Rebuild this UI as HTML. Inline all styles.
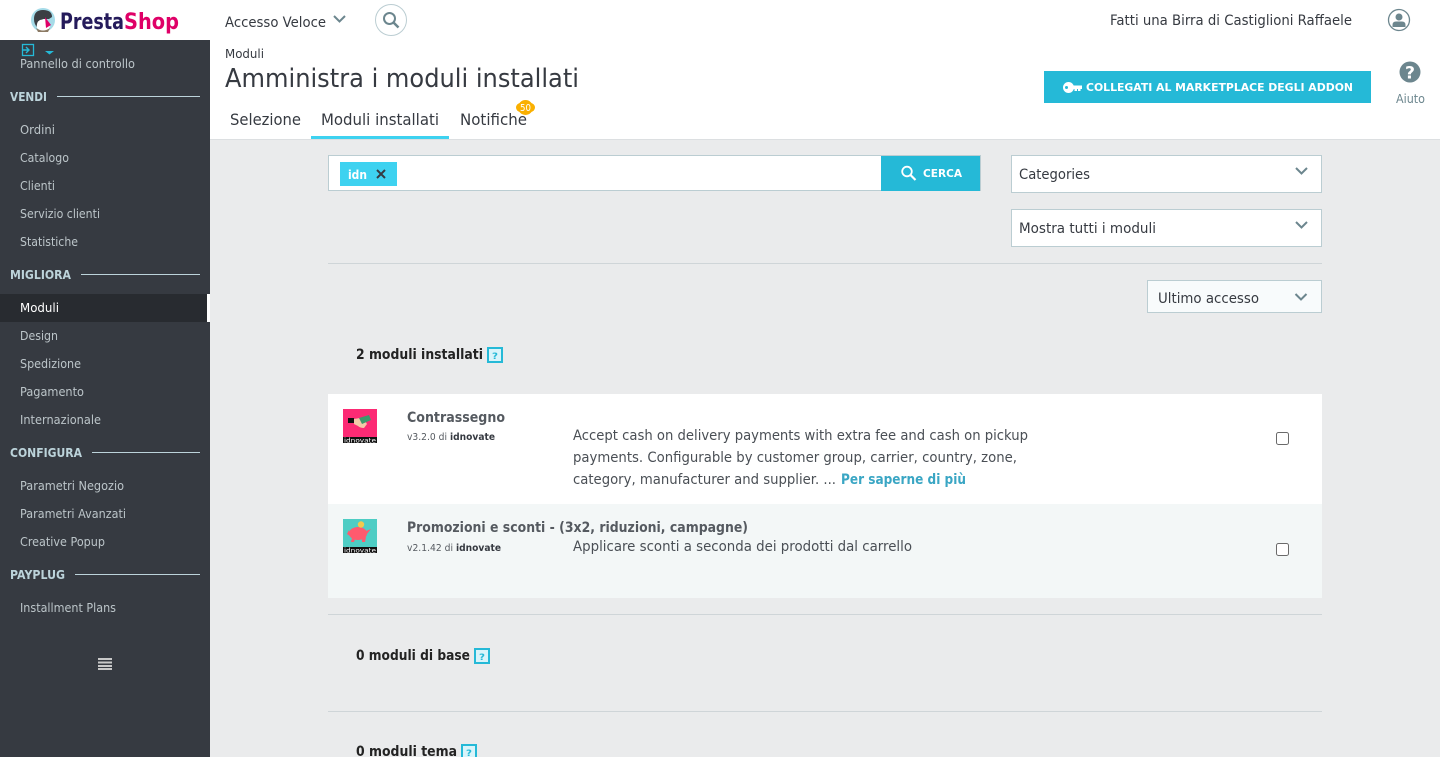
<!DOCTYPE html>
<html lang="it"><head><meta charset="utf-8"><title>Amministra i moduli installati</title>
<style>
html,body{margin:0;padding:0;width:1440px;height:757px;overflow:hidden;background:#eaebec;font-family:"DejaVu Sans","Liberation Sans",sans-serif}
.b{position:absolute;box-sizing:border-box}
svg{position:absolute;left:0;top:0}
text{font-family:"DejaVu Sans","Liberation Sans",sans-serif}
.s{font-size:12.5px;fill:#bcc5c9}
.h{font-size:12.5px;font-weight:bold;fill:#bcd3da}
.sel{background:#fff;border:1px solid #bbcdd2}
</style></head><body>
<div class="b" style="left:0;top:0;width:1440px;height:40px;background:#fff"></div>
<div class="b" style="left:210px;top:40px;width:1230px;height:100px;background:#fff;border-bottom:1px solid #dcdfe1"></div>
<div class="b" style="left:0;top:40px;width:210px;height:717px;background:#363a41"></div>
<div class="b" style="left:0;top:294px;width:210px;height:28px;background:#282b30"></div>
<div class="b" style="left:207px;top:294px;width:3px;height:28px;background:#fff"></div>
<div class="b" style="left:311px;top:136px;width:138px;height:3px;background:#3ed2f0"></div>
<div class="b" style="left:1044px;top:71px;width:327px;height:32px;background:#25b9d7"></div>
<div class="b" style="left:328px;top:155px;width:653px;height:36px;background:#fff;border:1px solid #bbcdd2"></div>
<div class="b" style="left:881px;top:156px;width:99px;height:35px;background:#25b9d7"></div>
<div class="b" style="left:340px;top:162px;width:57px;height:24px;background:#3ed2f0"></div>
<div class="b sel" style="left:1011px;top:155px;width:311px;height:38px"></div>
<div class="b sel" style="left:1011px;top:209px;width:311px;height:38px"></div>
<div class="b" style="left:328px;top:263px;width:994px;height:1px;background:#cfd5d8"></div>
<div class="b sel" style="left:1147px;top:280px;width:175px;height:33px;background:#f8fbfc"></div>
<div class="b" style="left:328px;top:394px;width:994px;height:110px;background:#fff"></div>
<div class="b" style="left:328px;top:504px;width:994px;height:94px;background:#f3f7f7"></div>
<div class="b" style="left:328px;top:614px;width:994px;height:1px;background:#cfd5d8"></div>
<div class="b" style="left:328px;top:711px;width:994px;height:1px;background:#cfd5d8"></div>

<svg width="1440" height="757" viewBox="0 0 1440 757" xmlns="http://www.w3.org/2000/svg">
<!-- logo -->
<circle cx="43" cy="20" r="12" fill="#a5dbe8"/>
<path d="M34 19q0-9 9-9t9 7l-3 2-6 0-4 3-2 5q-3-3-3-8z" fill="#3b3f44"/>
<path d="M37 28q-1-6 3-8l5-1 3 2 2 5-2 5q-6 2-11-3z" fill="#fff"/>
<path d="M45 17l6 8-5 3z" fill="#df0067"/>
<path d="M36 28q7 5 14 0l-2 4h-10z" fill="#8c7a64"/>
<text x="60" y="29" font-size="22.500" font-weight="bold" fill="#251b5b" textLength="64" lengthAdjust="spacingAndGlyphs">Presta</text>
<text x="124" y="29" font-size="22.500" font-weight="bold" fill="#df0067" textLength="55" lengthAdjust="spacingAndGlyphs">Shop</text>

<!-- top bar -->
<text x="225" y="27" font-size="14" fill="#363a41" textLength="101" lengthAdjust="spacingAndGlyphs">Accesso Veloce</text>
<path d="M334 16l5.500 5.500 5.500-5.500" fill="none" stroke="#6c868e" stroke-width="2"/>
<circle cx="391" cy="20" r="15.500" fill="#fff" stroke="#bbcdd2"/>
<circle cx="389.500" cy="18.500" r="5.500" fill="none" stroke="#6c868e" stroke-width="2"/>
<path d="M393.500 22.500l5 5" stroke="#6c868e" stroke-width="2.500"/>
<text x="1110" y="25" font-size="14" fill="#363a41" textLength="242" lengthAdjust="spacingAndGlyphs">Fatti una Birra di Castiglioni Raffaele</text>
<circle cx="1399" cy="20" r="10.500" fill="#fff" stroke="#6c868e" stroke-width="1.300"/>
<circle cx="1399" cy="17" r="3.500" fill="#6c868e"/>
<path d="M1392.500 27v-2q0-3.500 3.500-3.500h6q3.500 0 3.500 3.500v2z" fill="#6c868e"/>

<!-- sidebar -->
<rect x="22.500" y="44.500" width="11" height="11" fill="none" stroke="#25b9d7" stroke-width="1.300"/>
<path d="M22 50h7M26 47l3 3-3 3" fill="none" stroke="#25b9d7" stroke-width="1.400"/>
<path d="M45 51h9l-4.500 3.500z" fill="#25b9d7"/>
<text class="s" x="20" y="68" textLength="115" lengthAdjust="spacingAndGlyphs">Pannello di controllo</text>
<text class="h" x="10" y="101" textLength="37" lengthAdjust="spacingAndGlyphs">VENDI</text>
<rect x="57" y="96" width="143" height="1" fill="#bcd3da"/>
<text class="s" x="20" y="134" textLength="35" lengthAdjust="spacingAndGlyphs">Ordini</text>
<text class="s" x="20" y="162" textLength="49" lengthAdjust="spacingAndGlyphs">Catalogo</text>
<text class="s" x="20" y="190" textLength="35" lengthAdjust="spacingAndGlyphs">Clienti</text>
<text class="s" x="20" y="218" textLength="80" lengthAdjust="spacingAndGlyphs">Servizio clienti</text>
<text class="s" x="20" y="246" textLength="58" lengthAdjust="spacingAndGlyphs">Statistiche</text>
<text class="h" x="10" y="279" textLength="61" lengthAdjust="spacingAndGlyphs">MIGLIORA</text>
<rect x="81" y="274" width="119" height="1" fill="#bcd3da"/>
<text class="s" x="20" y="312" style="fill:#fff" textLength="39" lengthAdjust="spacingAndGlyphs">Moduli</text>
<text class="s" x="20" y="340" textLength="38" lengthAdjust="spacingAndGlyphs">Design</text>
<text class="s" x="20" y="368" textLength="61" lengthAdjust="spacingAndGlyphs">Spedizione</text>
<text class="s" x="20" y="396" textLength="64" lengthAdjust="spacingAndGlyphs">Pagamento</text>
<text class="s" x="20" y="424" textLength="81" lengthAdjust="spacingAndGlyphs">Internazionale</text>
<text class="h" x="10" y="457" textLength="72" lengthAdjust="spacingAndGlyphs">CONFIGURA</text>
<rect x="92" y="452" width="108" height="1" fill="#bcd3da"/>
<text class="s" x="20" y="490" textLength="104" lengthAdjust="spacingAndGlyphs">Parametri Negozio</text>
<text class="s" x="20" y="518" textLength="106" lengthAdjust="spacingAndGlyphs">Parametri Avanzati</text>
<text class="s" x="20" y="546" textLength="85" lengthAdjust="spacingAndGlyphs">Creative Popup</text>
<text class="h" x="10" y="579" textLength="55" lengthAdjust="spacingAndGlyphs">PAYPLUG</text>
<rect x="75" y="574" width="125" height="1" fill="#bcd3da"/>
<text class="s" x="20" y="612" textLength="96" lengthAdjust="spacingAndGlyphs">Installment Plans</text>
<path d="M98 658h14v2h-14zM98 661.500h14v2h-14zM98 665h14v2h-14zM98 668h14v2h-14z" fill="#c8c8c8"/>

<!-- header -->
<text x="225" y="58" font-size="12" fill="#363a41" textLength="39" lengthAdjust="spacingAndGlyphs">Moduli</text>
<text x="225" y="87" font-size="26" fill="#363a41" textLength="354" lengthAdjust="spacingAndGlyphs">Amministra i moduli installati</text>
<text x="230" y="125" font-size="16" fill="#363a41" textLength="71" lengthAdjust="spacingAndGlyphs">Selezione</text>
<text x="321" y="125" font-size="16" fill="#363a41" textLength="118" lengthAdjust="spacingAndGlyphs">Moduli installati</text>
<text x="460" y="125" font-size="16" fill="#363a41" textLength="67" lengthAdjust="spacingAndGlyphs">Notifiche</text>
<circle cx="525.500" cy="107.500" r="7.500" fill="#fab000"/>
<rect x="516" y="103" width="19" height="9" rx="4.500" fill="#fab000"/>
<text x="520" y="111" font-size="9.500" fill="#fff" textLength="11" lengthAdjust="spacingAndGlyphs">50</text>
<circle cx="1068.500" cy="87.500" r="5.500" fill="#fff"/>
<circle cx="1066.500" cy="87.500" r="1.500" fill="#25b9d7"/>
<path d="M1072 85.500h10v3.500h-1.500v2h-2.500v-2h-1v2h-2.500v-2h-2.500z" fill="#fff"/>
<text x="1086" y="91" font-size="11" font-weight="bold" fill="#fff" textLength="267" lengthAdjust="spacingAndGlyphs">COLLEGATI AL MARKETPLACE DEGLI ADDON</text>
<circle cx="1410" cy="72" r="10.500" fill="#6c868e"/>
<text x="1405" y="78.500" font-size="17" font-weight="bold" fill="#fff" textLength="10" lengthAdjust="spacingAndGlyphs">?</text>
<text x="1396" y="103" font-size="12" fill="#6c868e" textLength="29" lengthAdjust="spacingAndGlyphs">Aiuto</text>

<!-- search -->
<text x="348" y="179" font-size="12.500" font-weight="bold" fill="#fff" textLength="19" lengthAdjust="spacingAndGlyphs">idn</text>
<path d="M377 170l8 8M385 170l-8 8" stroke="#363a41" stroke-width="2"/>
<circle cx="907" cy="171.500" r="4.800" fill="none" stroke="#fff" stroke-width="1.800"/>
<path d="M910.500 175l5 5" stroke="#fff" stroke-width="2.200"/>
<text x="923" y="177" font-size="11" font-weight="bold" fill="#fff" textLength="39" lengthAdjust="spacingAndGlyphs">CERCA</text>

<text x="1019" y="179" font-size="14" fill="#363a41" textLength="71" lengthAdjust="spacingAndGlyphs">Categories</text>
<path d="M1296 168l5.500 5.500 5.500-5.500" fill="none" stroke="#6c868e" stroke-width="2"/>
<text x="1019" y="233" font-size="14" fill="#363a41" textLength="137" lengthAdjust="spacingAndGlyphs">Mostra tutti i moduli</text>
<path d="M1296 222l5.500 5.500 5.500-5.500" fill="none" stroke="#6c868e" stroke-width="2"/>
<text x="1158" y="303" font-size="14" fill="#363a41" textLength="101" lengthAdjust="spacingAndGlyphs">Ultimo accesso</text>
<path d="M1295.500 294l5.500 5.500 5.500-5.500" fill="none" stroke="#6c868e" stroke-width="2"/>

<!-- section titles -->
<text x="356" y="359" font-size="14" font-weight="bold" fill="#232323" textLength="127" lengthAdjust="spacingAndGlyphs">2 moduli installati</text>
<rect x="488" y="348" width="14" height="14" fill="#d9f4fa" stroke="#25b9d7" stroke-width="2"/>
<text x="492" y="359" font-size="9" font-weight="bold" fill="#25b9d7" textLength="6" lengthAdjust="spacingAndGlyphs">?</text>
<text x="356" y="660" font-size="14" font-weight="bold" fill="#232323" textLength="114" lengthAdjust="spacingAndGlyphs">0 moduli di base</text>
<rect x="475" y="649" width="14" height="14" fill="#d9f4fa" stroke="#25b9d7" stroke-width="2"/>
<text x="479" y="660" font-size="9" font-weight="bold" fill="#25b9d7" textLength="6" lengthAdjust="spacingAndGlyphs">?</text>
<text x="356" y="756" font-size="14" font-weight="bold" fill="#232323" textLength="101" lengthAdjust="spacingAndGlyphs">0 moduli tema</text>
<rect x="462" y="745" width="14" height="14" fill="#d9f4fa" stroke="#25b9d7" stroke-width="2"/>
<text x="466" y="756" font-size="9" font-weight="bold" fill="#25b9d7" textLength="6" lengthAdjust="spacingAndGlyphs">?</text>

<!-- row 1 -->
<rect x="343" y="409" width="34" height="34" fill="#fc2a74"/>
<rect x="343" y="437" width="34" height="6" fill="#111"/>
<text x="344" y="442.500" font-size="6.500" fill="#fff" textLength="32" lengthAdjust="spacingAndGlyphs">idnovate</text>
<rect x="348" y="418" width="6" height="5" fill="#111"/>
<path d="M354 419l6-1 5 3 2 3-3 4q-4 0-6-2l-4-2z" fill="#f3c9a8"/>
<path d="M359 418l10-3 2 5-9 4z" fill="#3c9a6b"/>
<text x="407" y="422" font-size="14" font-weight="bold" fill="#555a60" textLength="98" lengthAdjust="spacingAndGlyphs">Contrassegno</text>
<text x="407" y="440" font-size="10" fill="#555a60" textLength="40" lengthAdjust="spacingAndGlyphs">v3.2.0 di</text>
<text x="450" y="440" font-size="10" font-weight="bold" fill="#363a41" textLength="45" lengthAdjust="spacingAndGlyphs">idnovate</text>
<text x="573" y="440" font-size="14" fill="#4a4f55" textLength="455" lengthAdjust="spacingAndGlyphs">Accept cash on delivery payments with extra fee and cash on pickup</text>
<text x="573" y="462" font-size="14" fill="#4a4f55" textLength="444" lengthAdjust="spacingAndGlyphs">payments. Configurable by customer group, carrier, country, zone,</text>
<text x="573" y="484" font-size="14" fill="#4a4f55" textLength="263" lengthAdjust="spacingAndGlyphs">category, manufacturer and supplier. ...</text>
<text x="841" y="484" font-size="14" font-weight="bold" fill="#3aa6c4" textLength="125" lengthAdjust="spacingAndGlyphs">Per saperne di più</text>
<rect x="1276.500" y="432.500" width="12" height="12" rx="2" fill="#fff" stroke="#6a6a6a"/>

<!-- row 2 -->
<rect x="343" y="519" width="34" height="34" fill="#4ecdc4"/>
<rect x="343" y="547" width="34" height="6" fill="#111"/>
<text x="344" y="552.500" font-size="6.500" fill="#fff" textLength="32" lengthAdjust="spacingAndGlyphs">idnovate</text>
<ellipse cx="358" cy="533.500" rx="9" ry="6.500" fill="#ff5a6e"/>
<path d="M349 530l-2 4 3 2zM352 538l-1 4h3l1-3zM362 538v4h3l1-5zM366 531l5-2-4 5z" fill="#ff5a6e"/>
<circle cx="361" cy="524.500" r="3.200" fill="#f2c94c"/>
<text x="407" y="532" font-size="14" font-weight="bold" fill="#555a60" textLength="341" lengthAdjust="spacingAndGlyphs">Promozioni e sconti - (3x2, riduzioni, campagne)</text>
<text x="407" y="551" font-size="10" fill="#555a60" textLength="46" lengthAdjust="spacingAndGlyphs">v2.1.42 di</text>
<text x="456" y="551" font-size="10" font-weight="bold" fill="#363a41" textLength="45" lengthAdjust="spacingAndGlyphs">idnovate</text>
<text x="573" y="551" font-size="14" fill="#4a4f55" textLength="339" lengthAdjust="spacingAndGlyphs">Applicare sconti a seconda dei prodotti dal carrello</text>
<rect x="1276.500" y="543.500" width="12" height="12" rx="2" fill="#fff" stroke="#6a6a6a"/>
</svg>
</body></html>
